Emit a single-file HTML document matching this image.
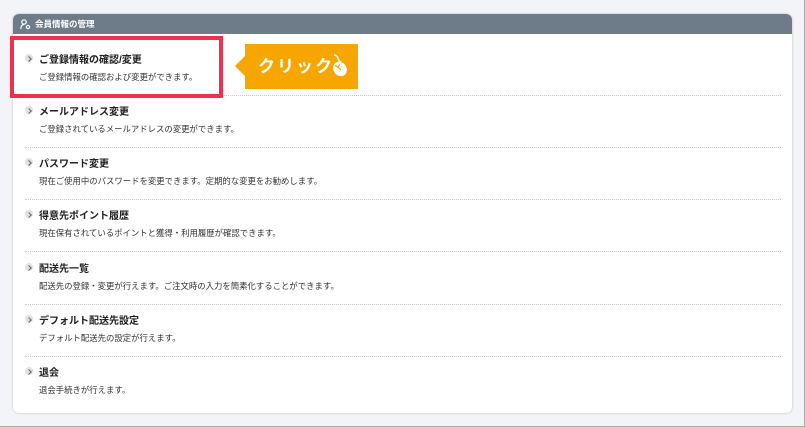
<!DOCTYPE html><html><head><meta charset="utf-8"><style>
*{margin:0;padding:0;box-sizing:border-box}
body{width:805px;height:427px;background:#f3f4f7;position:relative;overflow:hidden;font-family:"Liberation Sans","Noto Sans CJK JP",sans-serif;border-right:1px solid #aaa;border-bottom:1px solid #aaa}
.card{position:absolute;left:13px;top:14px;width:779px;height:399px;background:#fff;border-radius:6px;box-shadow:0 0 2px rgba(0,0,0,.25);overflow:hidden}
.hd{height:20px;background:#6e7b89;color:#fff;font-size:8.5px;font-weight:bold;line-height:20px;padding-left:22px;position:relative}
.row{position:absolute;left:12px;width:756px}
.row .t{position:absolute;left:14px;top:-7px;font-size:10px;font-weight:bold;color:#222;white-space:nowrap}
.row .c{position:absolute;left:0;top:-4px;width:8px;height:8px;border-radius:50%;background:#dfe1e4}
.row .c:after{content:"";position:absolute;left:1.5px;top:2.5px;width:3px;height:3px;border-right:1px solid #666;border-top:1px solid #666;transform:rotate(45deg)}
.row .d{position:absolute;left:14px;top:13px;font-size:8.4px;color:#333;white-space:nowrap}
.row .l{position:absolute;left:0;top:37px;width:756px;border-top:1px dotted #c8c8c8}
.red{position:absolute;left:10px;top:36px;width:213px;height:62px;border:4px solid #f0304f}
.or{position:absolute;left:245px;top:44px;width:113px;height:45px;background:#f7a600;color:#fff;font-weight:bold;font-size:17px;line-height:45px;padding-left:13px;letter-spacing:2px}
.or:before{content:"";position:absolute;left:-10px;top:12px;border-right:10px solid #f7a600;border-top:10px solid transparent;border-bottom:10px solid transparent}
</style></head><body>
<div class="card">
<div class="hd"><svg style="position:absolute;left:7px;top:5px" width="11" height="11" viewBox="0 0 11 11" fill="none" stroke="#fff" stroke-width="1.2"><circle cx="4" cy="3" r="2.2"/><path d="M0.8 10c0-3 1.5-4.5 3.2-4.5"/><circle cx="8" cy="8" r="1.6"/></svg>会員情報の管理</div>
<div class="row" style="top:44px"><div class="c"></div><div class="t">ご登録情報の確認/変更</div><div class="d">ご登録情報の確認および変更ができます。</div><div class="l"></div></div>
<div class="row" style="top:96px"><div class="c"></div><div class="t">メールアドレス変更</div><div class="d">ご登録されているメールアドレスの変更ができます。</div><div class="l"></div></div>
<div class="row" style="top:148px"><div class="c"></div><div class="t">パスワード変更</div><div class="d">現在ご使用中のパスワードを変更できます。定期的な変更をお勧めします。</div><div class="l"></div></div>
<div class="row" style="top:200px"><div class="c"></div><div class="t">得意先ポイント履歴</div><div class="d">現在保有されているポイントと獲得・利用履歴が確認できます。</div><div class="l"></div></div>
<div class="row" style="top:253px"><div class="c"></div><div class="t">配送先一覧</div><div class="d">配送先の登録・変更が行えます。ご注文時の入力を簡素化することができます。</div><div class="l"></div></div>
<div class="row" style="top:305px"><div class="c"></div><div class="t">デフォルト配送先設定</div><div class="d">デフォルト配送先の設定が行えます。</div><div class="l"></div></div>
<div class="row" style="top:357px"><div class="c"></div><div class="t">退会</div><div class="d">退会手続きが行えます。</div></div>
</div>
<div class="red"></div>
<div class="or">クリック<svg style="position:absolute;left:84px;top:9px" width="22" height="26" viewBox="0 0 22 26"><path d="M5 2c5 0 3 6 7 7" fill="none" stroke="#fff" stroke-width="1.5"/><ellipse cx="11" cy="16" rx="6.5" ry="7.5" fill="#fff" transform="rotate(-35 11 16)"/><path d="M6 12l6 5M9 14l2-3" stroke="#f7a600" stroke-width="1.2"/></svg></div>
</body></html>
